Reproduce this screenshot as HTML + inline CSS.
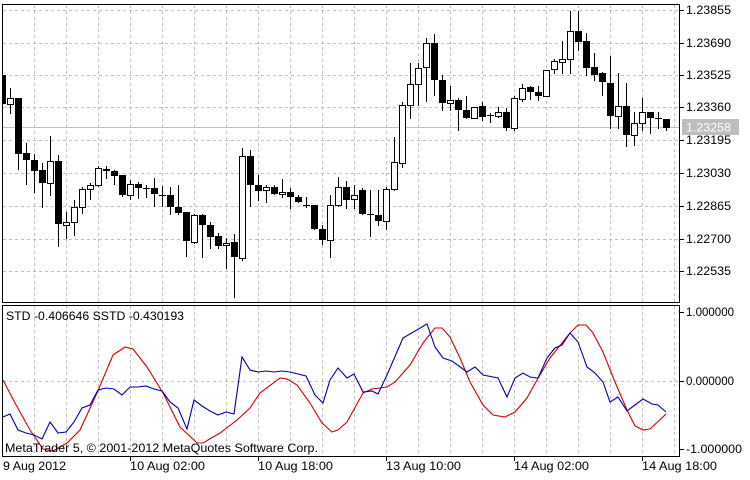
<!DOCTYPE html>
<html><head><meta charset="utf-8"><style>
html,body{margin:0;padding:0;background:#fff;width:750px;height:480px;overflow:hidden}
svg{display:block}
text{font-family:"Liberation Sans","DejaVu Sans",sans-serif;font-size:12px;fill:#000}
</style></head><body>
<svg id="s" width="750" height="480" xmlns="http://www.w3.org/2000/svg" shape-rendering="crispEdges">
<g id="grid" stroke="#c0c0c0" stroke-dasharray="3,3" stroke-width="1"></g>
<line x1="2" y1="127.5" x2="680" y2="127.5" stroke="#c0c0c0"/>
<g id="candles"></g>
<g shape-rendering="auto" fill="none" stroke-width="1.1">
<polyline id="red" stroke="#d00000"/>
<polyline id="blue" stroke="#0000b0"/>
</g>
<rect x="2.5" y="4.5" width="677" height="298" fill="none" stroke="#000"/>
<rect x="2.5" y="305.5" width="677" height="151" fill="none" stroke="#000"/>
<g id="ticks" stroke="#000"></g>
<g id="labels"></g>
<rect x="682" y="119" width="57" height="16" fill="#bdbdbd"/>
<text x="686" y="131.5" style="fill:#fff" textLength="45" lengthAdjust="spacingAndGlyphs">1.23258</text>
<text x="6" y="320" textLength="178" lengthAdjust="spacingAndGlyphs">STD -0.406646 SSTD -0.430193</text>
<text x="5" y="452" textLength="313" lengthAdjust="spacingAndGlyphs">MetaTrader 5, © 2001-2012 MetaQuotes Software Corp.</text>
<text x="3" y="470" textLength="63" lengthAdjust="spacingAndGlyphs">9 Aug 2012</text>
<text x="130" y="470" textLength="75" lengthAdjust="spacingAndGlyphs">10 Aug 02:00</text>
<text x="258" y="470" textLength="75" lengthAdjust="spacingAndGlyphs">10 Aug 18:00</text>
<text x="386" y="470" textLength="75" lengthAdjust="spacingAndGlyphs">13 Aug 10:00</text>
<text x="514" y="470" textLength="75" lengthAdjust="spacingAndGlyphs">14 Aug 02:00</text>
<text x="642" y="470" textLength="75" lengthAdjust="spacingAndGlyphs">14 Aug 18:00</text>
</svg>
<script>
var NS="http://www.w3.org/2000/svg";
function el(p,t,a){var e=document.createElementNS(NS,t);for(var k in a)e.setAttribute(k,a[k]);p.appendChild(e);return e;}
var g=document.getElementById('grid');
for(var x=34.5;x<680;x+=32){el(g,'line',{x1:x,y1:5,x2:x,y2:302});el(g,'line',{x1:x,y1:306,x2:x,y2:456});}
var py=[10,43,75,107,140,173,206,239,271];
py.forEach(function(y){el(g,'line',{x1:3,y1:y+.5,x2:679,y2:y+.5});});
el(g,'line',{x1:3,y1:381.5,x2:679,y2:381.5});
var tk=document.getElementById('ticks'),lb=document.getElementById('labels');
var pl=['1.23855','1.23690','1.23525','1.23360','1.23195','1.23030','1.22865','1.22700','1.22535'];
py.forEach(function(y,i){el(tk,'line',{x1:680,y1:y+.5,x2:684,y2:y+.5});var t=el(lb,'text',{x:686,y:y+4,textLength:45,lengthAdjust:'spacingAndGlyphs'});t.textContent=pl[i];});
[[312,'1.000000',48],[381,'0.000000',48],[449,'-1.000000',56]].forEach(function(a){el(tk,'line',{x1:680,y1:a[0]+.5,x2:684,y2:a[0]+.5});var t=el(lb,'text',{x:686,y:a[0]+4,textLength:a[2],lengthAdjust:'spacingAndGlyphs'});t.textContent=a[1];});
[130.5,258.5,386.5,514.5,642.5].forEach(function(x){el(tk,'line',{x1:x,y1:457,x2:x,y2:461});});
var C=[
[75,104,75,104,1],[98,104,88,113,0],[98,154,98,169,1],[153,160,143,184,1],[160,171,154,192,1],[170,183,163,207,1],[161,183,136,195,0],[161,224,155,246,1],
[222,225,212,238,0],[207,222,200,235,0],[189,207,187,213,0],[185,189,183,199,0],[168,185,166,186,0],[169,171,166,178,1],[171,176,170,184,1],[175,195,175,196,1],
[184,195,180,199,0],[184,188,182,198,1],[188,189,185,197,1],[188,194,178,206,1],[195,196,186,206,1],[195,207,187,214,1],[207,213,185,214,1],[212,241,212,256,1],
[215,242,214,243,0],[215,225,214,257,1],[225,237,222,248,1],[236,246,233,248,1],[243,245,238,268,0],[242,257,234,297,1],[156,258,148,260,0],[156,185,150,206,1],
[185,191,175,200,1],[187,190,185,202,0],[187,194,185,194,1],[192,194,179,197,0],[192,197,188,208,1],[197,202,195,202,1],[205,206,197,207,1],[205,229,205,229,1],
[229,240,225,244,1],[205,240,195,257,0],[187,205,177,206,0],[187,200,181,208,1],[195,199,185,208,0],[190,214,188,214,1],[214,215,190,236,1],[215,221,190,225,1],
[189,221,187,229,0],[162,189,137,190,0],[105,163,102,167,0],[84,105,63,118,0],[68,84,63,105,0],[43,67,38,101,0],[43,80,34,95,1],[80,103,75,110,1],
[100,103,86,110,0],[100,110,98,130,1],[110,118,96,118,1],[107,118,107,118,0],[106,117,102,120,1],[115,116,113,122,1],[112,116,107,117,0],[112,128,108,130,1],
[98,128,96,130,0],[88,99,84,101,0],[87,92,86,99,1],[92,96,86,100,1],[70,96,70,96,0],[61,69,59,73,0],[59,62,41,73,0],[31,59,11,73,0],
[31,42,11,50,1],[41,68,33,75,1],[67,75,53,80,1],[73,82,72,95,1],[83,116,56,128,1],[106,116,73,128,0],[106,135,83,146,1],[123,135,112,145,0],
[112,123,98,130,0],[112,118,112,133,1],[118,119,112,128,1],[119,128,119,130,1]];
var cg=document.getElementById('candles');
C.forEach(function(c,k){var x=2+8*k+.5;
 el(cg,'line',{x1:x,y1:c[2],x2:x,y2:c[3]+1,stroke:'#000'});
 if(c[4]){var x0=Math.max(3,x-3.5);el(cg,'rect',{x:x0,y:c[0],width:x+3.5-x0,height:Math.max(1,c[1]-c[0]),fill:'#000'});}
 else{el(cg,'rect',{x:x-3,y:c[0]+.5,width:6,height:Math.max(1,c[1]-c[0]),fill:'#fff',stroke:'#000'});}
});
var blue=[[3,417],[10,414],[18,430],[26,433],[34,435],[42,439],[50,422],[58,433],[66,432],[74,422],[82,408],[90,405],[98,390],[106,388],[114,389],[122,395],[130,387],[138,387],[146,386],[154,389],[162,391],[170,402],[178,408],[187,429],[194,400],[202,406],[210,411],[218,415],[226,412],[234,414],[242,357],[250,370],[258,372],[266,371],[274,372],[282,371],[290,372],[298,374],[306,376],[315,395],[323,403],[330,380],[338,368],[347,378],[354,374],[363,392],[372,391],[378,394],[387,375],[403,338],[427,324],[435,347],[443,358],[452,361],[467,372],[475,367],[483,375],[498,378],[507,397],[515,378],[523,373],[530,377],[538,378],[547,358],[555,348],[562,345],[570,333],[578,342],[587,367],[595,373],[603,382],[610,402],[618,397],[627,411],[643,399],[652,404],[658,405],[666,412]];
var red=[[3,380],[15,403],[30,430],[43,449],[53,451],[67,443],[80,430],[97,393],[113,355],[125,347],[133,349],[147,367],[163,393],[180,427],[197,443],[203,443],[213,437],[220,433],[237,420],[250,408],[260,393],[280,378],[287,379],[297,385],[310,403],[322,423],[332,432],[338,430],[347,422],[363,393],[372,389],[380,388],[387,387],[395,382],[410,365],[423,343],[435,328],[442,328],[450,337],[460,358],[470,382],[483,405],[493,415],[505,417],[515,412],[527,398],[537,380],[550,358],[570,333],[578,325],[586,325],[593,333],[603,352],[615,382],[627,410],[635,426],[643,430],[650,429],[666,414]];
document.getElementById('blue').setAttribute('points',blue.map(function(p){return p.join(',')}).join(' '));
document.getElementById('red').setAttribute('points',red.map(function(p){return p.join(',')}).join(' '));
</script>
</body></html>
